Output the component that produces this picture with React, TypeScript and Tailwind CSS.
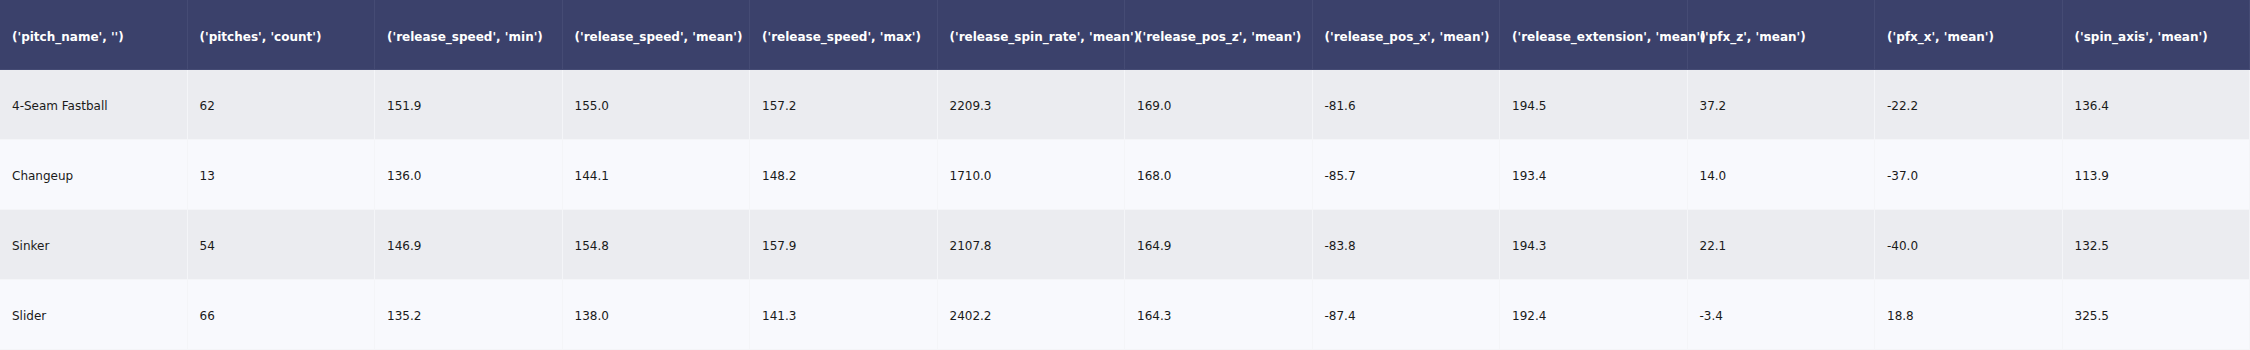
import React from "react";

const headers = [
    "('pitch_name', '')",
    "('pitches', 'count')",
    "('release_speed', 'min')",
    "('release_speed', 'mean')",
    "('release_speed', 'max')",
    "('release_spin_rate', 'mean')",
    "('release_pos_z', 'mean')",
    "('release_pos_x', 'mean')",
    "('release_extension', 'mean')",
    "('pfx_z', 'mean')",
    "('pfx_x', 'mean')",
    "('spin_axis', 'mean')",
];

const rows = [
    ["4-Seam Fastball", "62", "151.9", "155.0", "157.2", "2209.3", "169.0", "-81.6", "194.5", "37.2", "-22.2", "136.4"],
    ["Changeup", "13", "136.0", "144.1", "148.2", "1710.0", "168.0", "-85.7", "193.4", "14.0", "-37.0", "113.9"],
    ["Sinker", "54", "146.9", "154.8", "157.9", "2107.8", "164.9", "-83.8", "194.3", "22.1", "-40.0", "132.5"],
    ["Slider", "66", "135.2", "138.0", "141.3", "2402.2", "164.3", "-87.4", "192.4", "-3.4", "18.8", "325.5"],
];

export default function App() {
    return (
        <div className="w-[2250px] h-[350px] overflow-hidden bg-white text-[12px] font-['Verdana','DejaVu_Sans',sans-serif]">
            <div className="grid grid-cols-12 h-[70px] bg-[#3b416b]">
                {headers.map((h, i) => (
                    <div
                        key={i}
                        className="flex items-center pl-3 pt-1 whitespace-nowrap font-bold text-white border-r border-b border-[#454b74]"
                    >
                        {h}
                    </div>
                ))}
            </div>
            {rows.map((r, ri) => (
                <div
                    key={ri}
                    className={`grid grid-cols-12 h-[70px] ${ri % 2 === 0 ? "bg-[#ebecf0]" : "bg-[#f8f9fd]"}`}
                >
                    {r.map((c, ci) => (
                        <div
                            key={ci}
                            className="flex items-center pl-3 pt-[3px] whitespace-nowrap text-[#1a1a1a] border-r border-b border-[#f4f5f8]"
                        >
                            {c}
                        </div>
                    ))}
                </div>
            ))}
        </div>
    );
}
